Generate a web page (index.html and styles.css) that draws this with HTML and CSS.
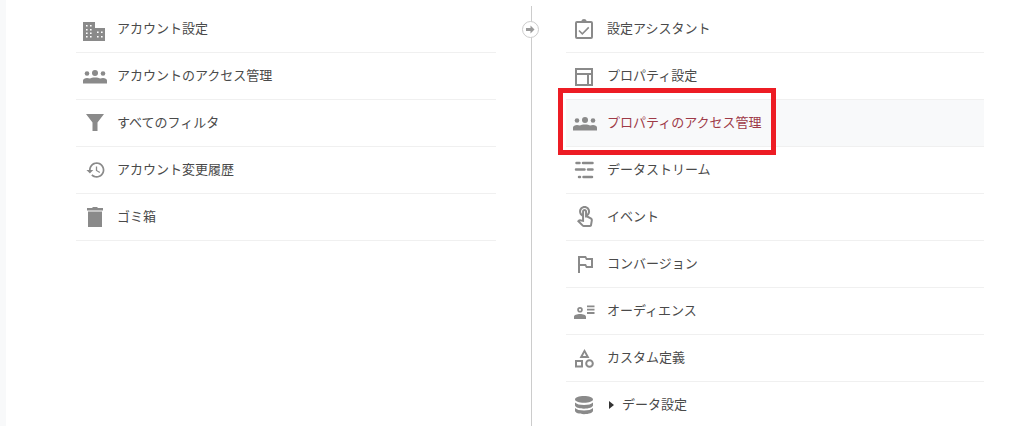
FILE: index.html
```html
<!DOCTYPE html>
<html lang="ja">
<head>
    <meta charset="UTF-8">
    <title>管理</title>
    <link rel="stylesheet" href="styles.css">
</head>
<body>
    <div class="page">
        <div class="strip"></div>

        <ul class="menu menu-account">
            <li class="item">
                <svg class="icon" viewBox="0 0 24 24"><path fill-rule="evenodd" d="M0 5h12v6h10v13H0zM3 8v1.600h1.600V8zm4 0v1.600h1.600V8zM3 12v1.600h1.600V12zm4 0v1.600h1.600V12zM3 15.500v1.600h1.600v-1.600zm4 0v1.600h1.600v-1.600zM3 19v1.600h1.600V19zm4 0v1.600h1.600V19zm7-4.500v1.600h1.600v-1.600zm4 0v1.600h1.600v-1.600zm-4 4.500v1.600h1.600V19zm4 0v1.600h1.600V19z"/></svg>
                <span class="label">アカウント設定</span>
            </li>
            <li class="item">
                <svg class="icon" viewBox="0 0 24 24"><circle cx="4" cy="9.500" r="2.300"/><circle cx="12" cy="9" r="3"/><circle cx="20" cy="9.500" r="2.300"/><path d="M0 19.500v-3c0-1.500 2-2.500 4-2.500 1 0 2 .2 2.700.6 1.200-.8 3-1.200 5.300-1.200s4.100.4 5.300 1.200c.7-.4 1.700-.6 2.700-.6 2 0 4 1 4 2.500v3z"/></svg>
                <span class="label">アカウントのアクセス管理</span>
            </li>
            <li class="item">
                <svg class="icon" viewBox="0 0 24 24"><path d="M3 3h18l-6.500 8.500V20h-5v-8.500z"/></svg>
                <span class="label">すべてのフィルタ</span>
            </li>
            <li class="item">
                <svg class="icon" viewBox="-3 -2 28 28"><path d="M13 3c-4.970 0-9 4.030-9 9H1l3.890 3.890.070.140L9 12H6c0-3.870 3.130-7 7-7s7 3.130 7 7-3.130 7-7 7c-1.930 0-3.680-.790-4.940-2.060l-1.420 1.420C8.270 19.990 10.510 21 13 21c4.970 0 9-4.030 9-9s-4.030-9-9-9zm-1 5v5l4.280 2.540.720-1.210-3.500-2.080V8H12z"/></svg>
                <span class="label">アカウント変更履歴</span>
            </li>
            <li class="item">
                <svg class="icon" viewBox="0 0 24 24"><path d="M5 6.500h14V22H5zM4 3h5l1-1h4l1 1h5v2.500H4z"/></svg>
                <span class="label">ゴミ箱</span>
            </li>
        </ul>

        <div class="divider">
            <svg class="divider-arrow" viewBox="0 0 17 17">
                <circle cx="8.500" cy="8.500" r="8" fill="#fff" stroke="#ccc"/>
                <path fill="#999" d="M4 7h4.500V4.500l4 4-4 4V10H4z"/>
            </svg>
        </div>

        <ul class="menu menu-property">
            <li class="item">
                <svg class="icon" viewBox="0 0 24 24"><path fill-rule="evenodd" d="M4 4h4.300a2.800 2.800 0 0 1 5.400 0H18a2 2 0 0 1 2 2v14a2 2 0 0 1-2 2H4a2 2 0 0 1-2-2V6a2 2 0 0 1 2-2zm0 2v14h14V6zm11.200 3.800 1.100 1.100-7 7-3.900-3.900 1.100-1.100 2.800 2.800z"/></svg>
                <span class="label">設定アシスタント</span>
            </li>
            <li class="item">
                <svg class="icon" viewBox="0 0 24 24"><path fill-rule="evenodd" d="M2 4h18v18H2zm2 2v3h14V6zm0 5v9h10v-9zm12 0v9h2v-9z"/></svg>
                <span class="label">プロパティ設定</span>
            </li>
            <li class="item item-active">
                <svg class="icon" viewBox="0 0 24 24"><circle cx="4" cy="9.500" r="2.300"/><circle cx="12" cy="9" r="3"/><circle cx="20" cy="9.500" r="2.300"/><path d="M0 19.500v-3c0-1.500 2-2.500 4-2.500 1 0 2 .2 2.700.6 1.200-.8 3-1.200 5.300-1.200s4.100.4 5.300 1.200c.7-.4 1.700-.6 2.700-.6 2 0 4 1 4 2.500v3z"/></svg>
                <span class="label">プロパティのアクセス管理</span>
                <div class="highlight"></div>
            </li>
            <li class="item">
                <svg class="icon icon-lines" viewBox="0 0 24 24"><path d="M3.500 5h3M10 5h9.500M3 11.500h8.500M15 11.500h4.500M6 19h1M10.500 19h8.500"/></svg>
                <span class="label">データストリーム</span>
            </li>
            <li class="item">
                <svg class="icon" viewBox="0 0 24 24"><path d="M18.190 12.440l-3.240-1.620c1.290-1 2.120-2.560 2.120-4.320 0-3.030-2.470-5.500-5.500-5.500s-5.500 2.470-5.500 5.500c0 2.130 1.220 3.980 3 4.890v3.260c-2.150-.460-2.020-.440-2.260-.440-.530 0-1.030.210-1.410.590L4 16.220l5.090 5.090C9.520 21.750 10.120 22 10.740 22h6.300c.980 0 1.810-.700 1.970-1.670l.800-4.710c.220-1.300-.430-2.580-1.620-3.180zm-.350 2.850l-.800 4.710h-6.300c-.090 0-.170-.040-.240-.100l-3.680-3.680 4.250.890V6.500c0-.280.220-.500.500-.500s.500.220.500.500v6h1.760l3.460 1.730c.400.200.620.630.550 1.060zM8.070 6.500c0-1.930 1.570-3.500 3.500-3.500s3.500 1.570 3.500 3.500c0 .950-.380 1.810-1 2.440V6.500c0-1.380-1.120-2.500-2.500-2.500s-2.500 1.120-2.500 2.500v2.440c-.620-.630-1-1.490-1-2.440z"/></svg>
                <span class="label">イベント</span>
            </li>
            <li class="item">
                <svg class="icon" viewBox="0 0 24 24"><path d="M14 6l-1-2H5v17h2v-7h5l1 2h7V6h-6zm4 8h-4l-1-2H7V6h5l1 2h5v6z"/></svg>
                <span class="label">コンバージョン</span>
            </li>
            <li class="item">
                <svg class="icon" viewBox="0 0 24 24"><path fill-rule="evenodd" d="M7 8a2.800 2.800 0 1 1 0 5.600A2.800 2.800 0 0 1 7 8zm0 1.700a1.100 1.100 0 1 0 0 2.200 1.100 1.100 0 0 0 0-2.200zM7 15c3 0 6 1 6 2.800V20H1v-2.200C1 16 4 15 7 15zM14 6.500h7.500v1.800H14zm0 3.300h7.500v1.800H14zm0 3.300h7.500v1.800H14z"/></svg>
                <span class="label">オーディエンス</span>
            </li>
            <li class="item">
                <svg class="icon" viewBox="0 0 24 24"><path fill-rule="evenodd" d="M11.500 3l5 9h-10zm0 3.800L9.900 10h3.200zM2 14h8v7.500H2zm2 2v3.500h4V16zM16.500 13.200a4.300 4.300 0 1 1 0 8.600 4.300 4.300 0 0 1 0-8.600zm0 2a2.300 2.300 0 1 0 0 4.600 2.300 2.300 0 0 0 0-4.600z"/></svg>
                <span class="label">カスタム定義</span>
            </li>
            <li class="item">
                <svg class="icon" viewBox="0 0 24 24"><path d="M11 3c5 0 9 1.600 9 3.400s-4 3.400-9 3.400-9-1.600-9-3.400S6 3 11 3zM2 9.500c1.500 1.700 5 2.500 9 2.500s7.500-.8 9-2.500v2.800c0 1.900-4 3.400-9 3.400s-9-1.500-9-3.400zM2 15c1.500 1.700 5 2.500 9 2.500s7.500-.8 9-2.500v2.800c0 1.900-4 3.400-9 3.400s-9-1.500-9-3.400z"/></svg>
                <span class="caret"></span>
                <span class="label">データ設定</span>
            </li>
        </ul>
    </div>
</body>
</html>
```

FILE: styles.css
```css
html, body {
    margin: 0;
    padding: 0;
    height: 426px;
    overflow: hidden;
    background-color: #ffffff;
}

body {
    font-family: "Noto Sans CJK JP", "Liberation Sans", sans-serif;
    font-size: 13px;
    color: #4a4a4a;
}

.page {
    display: flex;
    height: 426px;
}

.strip {
    width: 6px;
    background-color: #f8f9fa;
}

.menu {
    list-style: none;
    margin: 0;
    padding: 0;
    padding-top: 6px;
}

.menu-account {
    width: 420px;
    margin-left: 70px;
}

.menu-property {
    width: 418px;
    margin-left: 34px;
}

.item {
    position: relative;
    display: flex;
    align-items: center;
    height: 46px;
    padding-left: 7px;
    border-bottom: 1px solid #f0f0f0;
}

.label {
    margin-bottom: 4px;
}

.icon {
    flex: none;
    width: 24px;
    height: 24px;
    margin-right: 10px;
    fill: #8a8a8a;
}

.icon-lines {
    fill: none;
    stroke: #8a8a8a;
    stroke-width: 2.500;
    stroke-linecap: round;
}

.item-active {
    background-color: #f8f9fa;
    color: #9e3a47;
}

.highlight {
    position: absolute;
    top: -12px;
    left: -8px;
    width: 208px;
    height: 57px;
    border: 5px solid #ed1c24;
}

.caret {
    width: 0;
    height: 0;
    margin: 0 8px 0 2px;
    border-left: 5px solid #333333;
    border-top: 4px solid transparent;
    border-bottom: 4px solid transparent;
}

.divider {
    position: relative;
    width: 1px;
    margin-top: 6px;
    margin-left: 35px;
    background-color: #cccccc;
}

.divider-arrow {
    position: absolute;
    top: 15px;
    left: -9px;
    width: 17px;
    height: 17px;
}
```
